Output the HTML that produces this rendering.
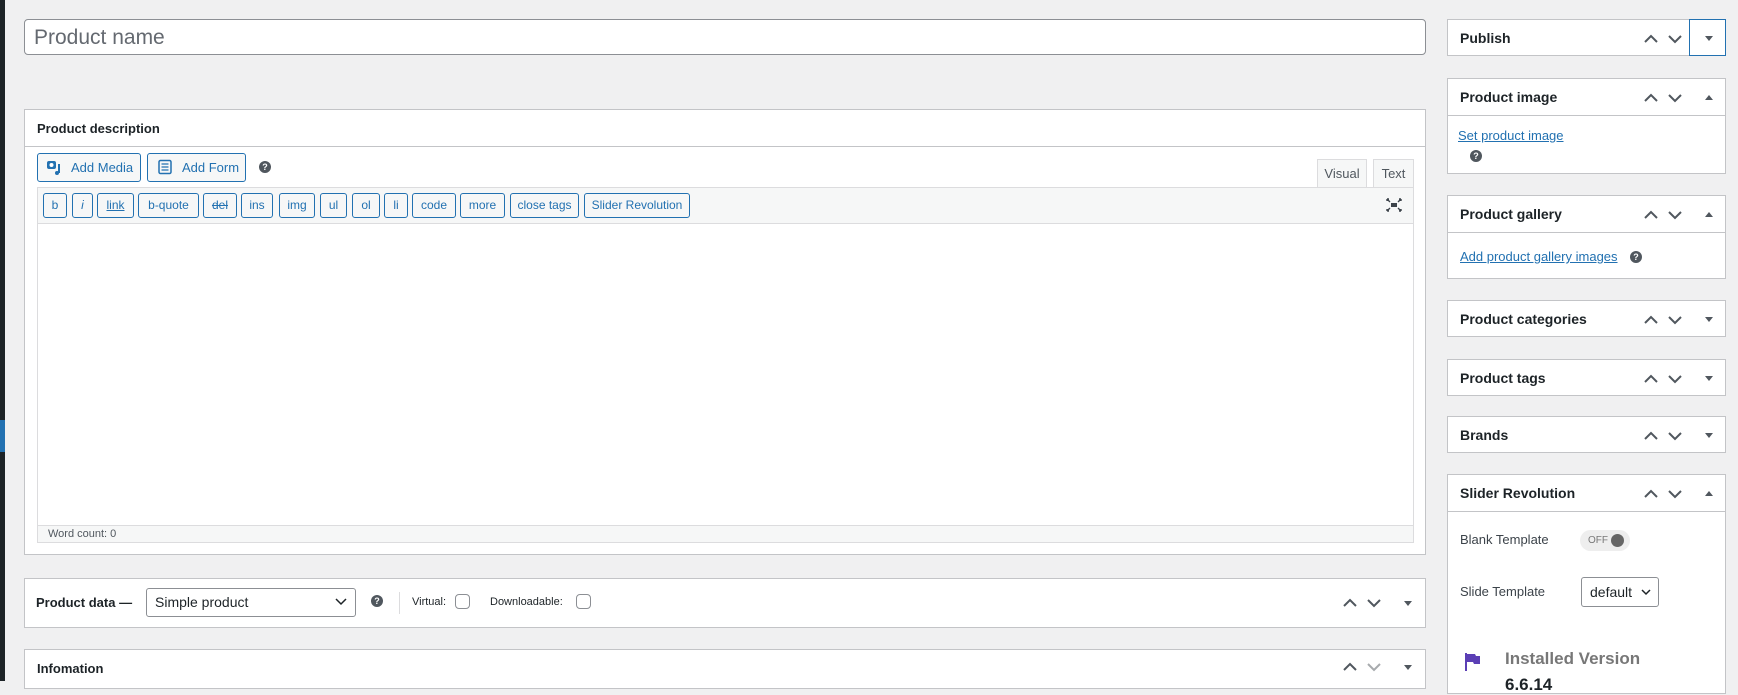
<!DOCTYPE html>
<html><head><meta charset="utf-8"><style>
*{box-sizing:border-box;margin:0;padding:0}
body{width:1738px;height:681px;overflow:hidden;background:#f0f0f1;font-family:"Liberation Sans",sans-serif;color:#1d2327;position:relative;font-size:13px}
.a{position:absolute}
.box{position:absolute;background:#fff;border:1px solid #c3c4c7}
.hd{position:absolute;left:0;right:0;top:0;border-bottom:1px solid #c3c4c7}
.ttl{position:absolute;font-weight:bold;font-size:14px;color:#1d2327}
.tb{position:absolute;top:193px;height:25px;border:1px solid #2271b1;border-radius:3px;background:#f6f7f7;color:#2271b1;font-size:12px;text-align:center;line-height:23px}
.help{position:absolute;width:12px;height:12px;border-radius:50%;background:#50575e;color:#fff;font-size:9px;font-weight:bold;text-align:center;line-height:12px}
a{color:#2271b1;text-decoration:underline}
</style></head><body>
<div class="a" style="left:0;top:0;width:5px;height:681px;background:#1d2327"></div>
<div class="a" style="left:0;top:420px;width:5px;height:32px;background:#2271b1"></div>

<div class="a" style="left:24px;top:19px;width:1402px;height:36px;background:#fff;border:1px solid #8c8f94;border-radius:4px;font-size:21px;color:#646970;padding:6px 9px;line-height:24px">Product name</div>

<div class="box" style="left:24px;top:109px;width:1402px;height:446px">
  <div class="hd" style="height:37px"></div>
</div>
<div class="ttl" style="left:37px;top:121px;font-size:13px">Product description</div>
<div class="a" style="left:37px;top:153px;width:104px;height:29px;border:1px solid #2271b1;border-radius:3px;background:#f6f7f7;color:#2271b1;font-size:13px;line-height:27px;padding-left:33px">Add Media</div>
<svg class="a" style="left:46px;top:160px" width="18" height="16" viewBox="0 0 18 16"><rect x="1" y="1" width="9" height="8" rx="2" fill="#2271b1"/><circle cx="5.5" cy="5" r="2" fill="#fff"/><path d="M13 4v9" stroke="#2271b1" stroke-width="2"/><circle cx="11" cy="13" r="2" fill="#2271b1"/></svg>
<div class="a" style="left:147px;top:153px;width:99px;height:29px;border:1px solid #2271b1;border-radius:3px;background:#f6f7f7;color:#2271b1;font-size:13px;line-height:27px;padding-left:34px">Add Form</div>
<svg class="a" style="left:157px;top:159px" width="16" height="16" viewBox="0 0 16 16"><rect x="2" y="1.5" width="12" height="13" rx="1.5" fill="none" stroke="#2271b1" stroke-width="1.5"/><path d="M4.5 5h7M4.5 8h7M4.5 11h7" stroke="#2271b1" stroke-width="1.3"/></svg>
<div class="help" style="left:259px;top:161px">?</div>

<div class="a" style="left:1317px;top:159px;width:50px;height:29px;background:#f6f7f7;border:1px solid #dcdcde;border-bottom:none;color:#50575e;font-size:13px;text-align:center;line-height:28px">Visual</div>
<div class="a" style="left:1373px;top:159px;width:41px;height:30px;background:#f6f7f7;border:1px solid #dcdcde;border-bottom:none;color:#50575e;font-size:13px;text-align:center;line-height:28px">Text</div>
<div class="a" style="left:37px;top:187px;width:1377px;height:356px;border:1px solid #dcdcde;background:#fff"></div>
<div class="a" style="left:38px;top:188px;width:1375px;height:36px;background:#f6f7f7;border-bottom:1px solid #dcdcde"></div>
<div class="tb" style="left:43px;width:24px">b</div>
<div class="tb" style="left:72px;width:21px;font-style:italic">i</div>
<div class="tb" style="left:97px;width:37px;text-decoration:underline">link</div>
<div class="tb" style="left:138px;width:61px">b-quote</div>
<div class="tb" style="left:203px;width:34px;text-decoration:line-through">del</div>
<div class="tb" style="left:241px;width:32px">ins</div>
<div class="tb" style="left:279px;width:36px">img</div>
<div class="tb" style="left:320px;width:27px">ul</div>
<div class="tb" style="left:352px;width:28px">ol</div>
<div class="tb" style="left:384px;width:24px">li</div>
<div class="tb" style="left:412px;width:44px">code</div>
<div class="tb" style="left:460px;width:45px">more</div>
<div class="tb" style="left:510px;width:69px">close tags</div>
<div class="tb" style="left:584px;width:106px">Slider Revolution</div>
<svg class="a" style="left:1386px;top:198px" width="16" height="14" viewBox="0 0 16 14"><rect x="5" y="5" width="6" height="4" fill="#3c434a"/><path d="M1 1l3 3M15 1l-3 3M1 13l3-3M15 13l-3-3M1 1h2M1 1v2M15 1h-2M15 1v2M1 13h2M1 13v-2M15 13h-2M15 13v-2" stroke="#3c434a" stroke-width="1.4"/></svg>
<div class="a" style="left:38px;top:525px;width:1375px;height:17px;background:#f6f7f7;border-top:1px solid #dcdcde;font-size:11px;color:#50575e;padding-left:10px;line-height:16px">Word count: 0</div>

<div class="box" style="left:24px;top:578px;width:1402px;height:50px"></div>
<div class="ttl" style="left:36px;top:595px;font-size:13px">Product data —</div>
<div class="a" style="left:146px;top:588px;width:210px;height:29px;border:1px solid #8c8f94;border-radius:3px;background:#fff;font-size:14px;line-height:27px;padding-left:8px">Simple product</div>
<svg class="a" style="left:335px;top:598px" width="12" height="8"><path d="M1 1l5 5 5-5" stroke="#1d2327" stroke-width="1.5" fill="none"/></svg>
<div class="help" style="left:371px;top:595px">?</div>
<div class="a" style="left:399px;top:592px;width:1px;height:22px;background:#dcdcde"></div>
<div class="a" style="left:412px;top:596px;font-size:11px">Virtual:</div>
<div class="a" style="left:455px;top:594px;width:15px;height:15px;border:1px solid #8c8f94;border-radius:4px;background:#fff"></div>
<div class="a" style="left:490px;top:596px;font-size:11px">Downloadable:</div>
<div class="a" style="left:576px;top:594px;width:15px;height:15px;border:1px solid #8c8f94;border-radius:4px;background:#fff"></div>
<svg class="a" style="left:1342px;top:596px" width="90" height="14"><path d="M2 10l6-6 6 6M26 4l6 6 6-6" stroke="#50575e" stroke-width="2" fill="none"/><path d="M62 5h8l-4 5z" fill="#50575e"/></svg>

<div class="box" style="left:24px;top:649px;width:1402px;height:40px"></div>
<div class="ttl" style="left:37px;top:661px;font-size:13px">Infomation</div>
<svg class="a" style="left:1342px;top:660px" width="90" height="14"><path d="M2 10l6-6 6 6" stroke="#50575e" stroke-width="2" fill="none"/><path d="M26 4l6 6 6-6" stroke="#a7aaad" stroke-width="2" fill="none"/><path d="M62 5h8l-4 5z" fill="#50575e"/></svg>

<div class="box" style="left:1447px;top:19px;width:279px;height:37px"></div>
<div class="ttl" style="left:1460px;top:30px">Publish</div>
<div class="a" style="left:1689px;top:19px;width:37px;height:37px;border:1px solid #2271b1"></div>

<div class="box" style="left:1447px;top:78px;width:279px;height:96px"><div class="hd" style="height:37px"></div></div>
<div class="ttl" style="left:1460px;top:89px">Product image</div>
<a class="a" style="left:1458px;top:128px;font-size:13px">Set product image</a>
<div class="help" style="left:1470px;top:150px">?</div>

<div class="box" style="left:1447px;top:195px;width:279px;height:84px"><div class="hd" style="height:37px"></div></div>
<div class="ttl" style="left:1460px;top:206px">Product gallery</div>
<a class="a" style="left:1460px;top:249px;font-size:13px">Add product gallery images</a>
<div class="help" style="left:1630px;top:251px">?</div>

<div class="box" style="left:1447px;top:300px;width:279px;height:37px"></div>
<div class="ttl" style="left:1460px;top:311px">Product categories</div>
<div class="box" style="left:1447px;top:359px;width:279px;height:37px"></div>
<div class="ttl" style="left:1460px;top:370px">Product tags</div>
<div class="box" style="left:1447px;top:416px;width:279px;height:37px"></div>
<div class="ttl" style="left:1460px;top:427px">Brands</div>
<div class="box" style="left:1447px;top:474px;width:279px;height:220px"><div class="hd" style="height:37px"></div></div>
<div class="ttl" style="left:1460px;top:485px">Slider Revolution</div>
<div class="a" style="left:1460px;top:532px;font-size:13px;color:#3c434a">Blank Template</div>
<div class="a" style="left:1580px;top:530px;width:50px;height:21px;border-radius:11px;background:#eeeeee;font-size:10px;color:#777;padding-left:8px;line-height:21px">OFF</div>
<div class="a" style="left:1611px;top:534px;width:13px;height:13px;border-radius:50%;background:#666"></div>
<div class="a" style="left:1460px;top:584px;font-size:13px;color:#3c434a">Slide Template</div>
<div class="a" style="left:1581px;top:577px;width:78px;height:30px;border:1px solid #8c8f94;border-radius:3px;font-size:14px;line-height:28px;padding-left:8px">default</div>
<svg class="a" style="left:1641px;top:589px" width="10" height="7"><path d="M1 1l4 4 4-4" stroke="#1d2327" stroke-width="1.5" fill="none"/></svg>
<svg class="a" style="left:1465px;top:652px" width="16" height="20"><path d="M1 1v18" stroke="#5b3fb5" stroke-width="2"/><path d="M2 2h8l1 2h4v8h-6l-1-2H2z" fill="#5b3fb5"/></svg>
<div class="a" style="left:1505px;top:649px;font-size:17px;font-weight:bold;color:#777">Installed Version</div>
<div class="a" style="left:1505px;top:675px;font-size:17px;font-weight:bold;color:#1d2327">6.6.14</div>

<svg class="a" style="left:1640px;top:30px" width="85" height="470">
<g stroke="#50575e" stroke-width="2" fill="none">
<path d="M5 12l6-6 6 6M29 6l6 6 6-6"/>
<path d="M5 71l6-6 6 6M29 65l6 6 6-6"/>
<path d="M5 188l6-6 6 6M29 182l6 6 6-6"/>
<path d="M5 293l6-6 6 6M29 287l6 6 6-6"/>
<path d="M5 352l6-6 6 6M29 346l6 6 6-6"/>
<path d="M5 409l6-6 6 6M29 403l6 6 6-6"/>
<path d="M5 467l6-6 6 6M29 461l6 6 6-6"/>
</g>
<g fill="#50575e">
<path d="M65 6h8l-4 5z"/>
<path d="M65 70h8l-4-5z"/>
<path d="M65 187h8l-4-5z"/>
<path d="M65 287h8l-4 5z"/>
<path d="M65 346h8l-4 5z"/>
<path d="M65 403h8l-4 5z"/>
<path d="M65 466h8l-4-5z"/>
</g>
</svg>
</body></html>
